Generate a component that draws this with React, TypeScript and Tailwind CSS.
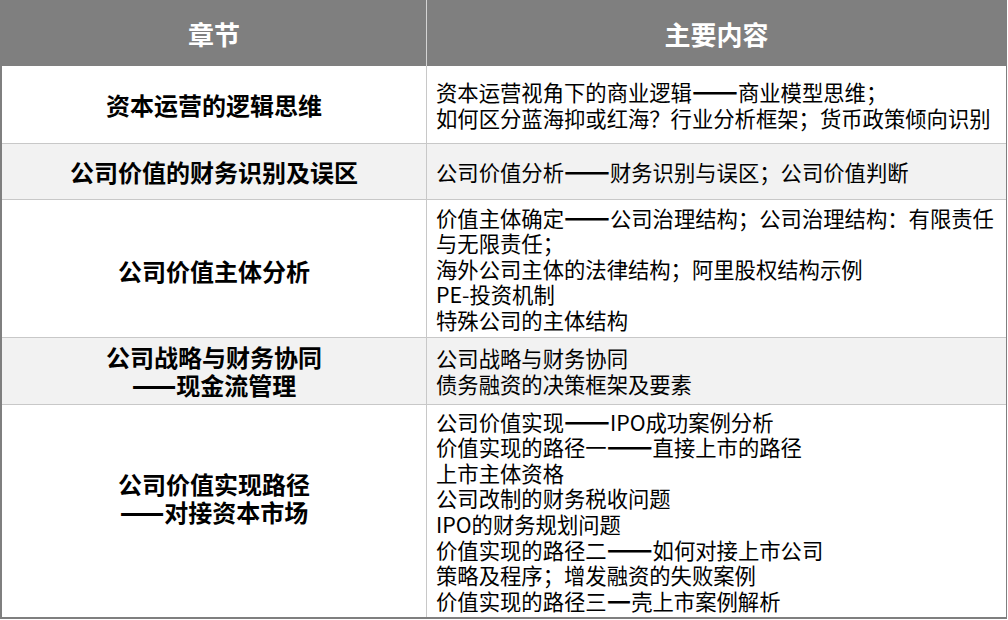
import React from 'react';

interface Row {
  title: string[];
  items: string[];
  height: string;
  shaded?: boolean;
  titlePad?: string;
}

const rows: Row[] = [
  {
    title: ['资本运营的逻辑思维'],
    items: ['资本运营视角下的商业逻辑——商业模型思维；', '如何区分蓝海抑或红海？行业分析框架；货币政策倾向识别'],
    height: 'h-[78px]',
  },
  {
    title: ['公司价值的财务识别及误区'],
    items: ['公司价值分析——财务识别与误区；公司价值判断'],
    height: 'h-[56px]',
    shaded: true,
  },
  {
    title: ['公司价值主体分析'],
    items: [
      '价值主体确定——公司治理结构；公司治理结构：有限责任',
      '与无限责任；',
      '海外公司主体的法律结构；阿里股权结构示例',
      'PE-投资机制',
      '特殊公司的主体结构',
    ],
    height: 'h-[138px]',
    titlePad: 'pt-[4px]',
  },
  {
    title: ['公司战略与财务协同', '——现金流管理'],
    items: ['公司战略与财务协同', '债务融资的决策框架及要素'],
    height: 'h-[67px]',
    shaded: true,
  },
  {
    title: ['公司价值实现路径', '——对接资本市场'],
    items: [
      '公司价值实现——IPO成功案例分析',
      '价值实现的路径一——直接上市的路径',
      '上市主体资格',
      '公司改制的财务税收问题',
      'IPO的财务规划问题',
      '价值实现的路径二——如何对接上市公司',
      '策略及程序；增发融资的失败案例',
      '价值实现的路径三—壳上市案例解析',
    ],
    height: 'h-[212px]',
    titlePad: 'pb-[26px]',
  },
];

// the source font draws its dashes wider and heavier than Noto does
function Dashed({ text, dash }: { text: string; dash: string }) {
  const parts = text.split(/(—+)/);
  return (
    <>
      {parts.map((p, i) =>
        p.startsWith('—') ? (
          <span key={i} className={dash}>
            {p}
          </span>
        ) : (
          <React.Fragment key={i}>{p}</React.Fragment>
        )
      )}
    </>
  );
}

export default function App() {
  return (
    <div className="w-[1007px] bg-white font-['Noto_Sans_CJK_SC',sans-serif] text-black border-l-2 border-r border-b-2 border-[#7f7f7f]">
      <div className="flex h-[66px] bg-[#7f7f7f] text-white font-bold text-[26px]">
        <div className="w-[425px] border-r border-[#d4d4d4] flex items-center justify-center">章节</div>
        <div className="flex-1 flex items-center justify-center">主要内容</div>
      </div>
      {rows.map((row, i) => (
        <div
          key={i}
          className={`flex ${row.height} ${row.shaded ? 'bg-[#f2f2f2]' : 'bg-white'} ${
            i < rows.length - 1 ? 'border-b border-[#c8c8c8]' : ''
          }`}
        >
          <div
            className={`w-[425px] shrink-0 border-r border-[#c8c8c8] flex flex-col items-center justify-center text-[24px] leading-[28px] font-bold ${
              row.titlePad ?? ''
            }`}
          >
            {row.title.map((t) => (
              <div key={t}>
                <Dashed text={t} dash="text-[26px] leading-[0px] font-black" />
              </div>
            ))}
          </div>
          <div className="flex-1 flex flex-col justify-center pl-[9px] text-[21.33px] leading-[25.6px] whitespace-nowrap">
            {row.items.map((t) => (
              <div key={t}>
                <Dashed text={t} dash="text-[27px] leading-[0px] font-bold" />
              </div>
            ))}
          </div>
        </div>
      ))}
    </div>
  );
}
